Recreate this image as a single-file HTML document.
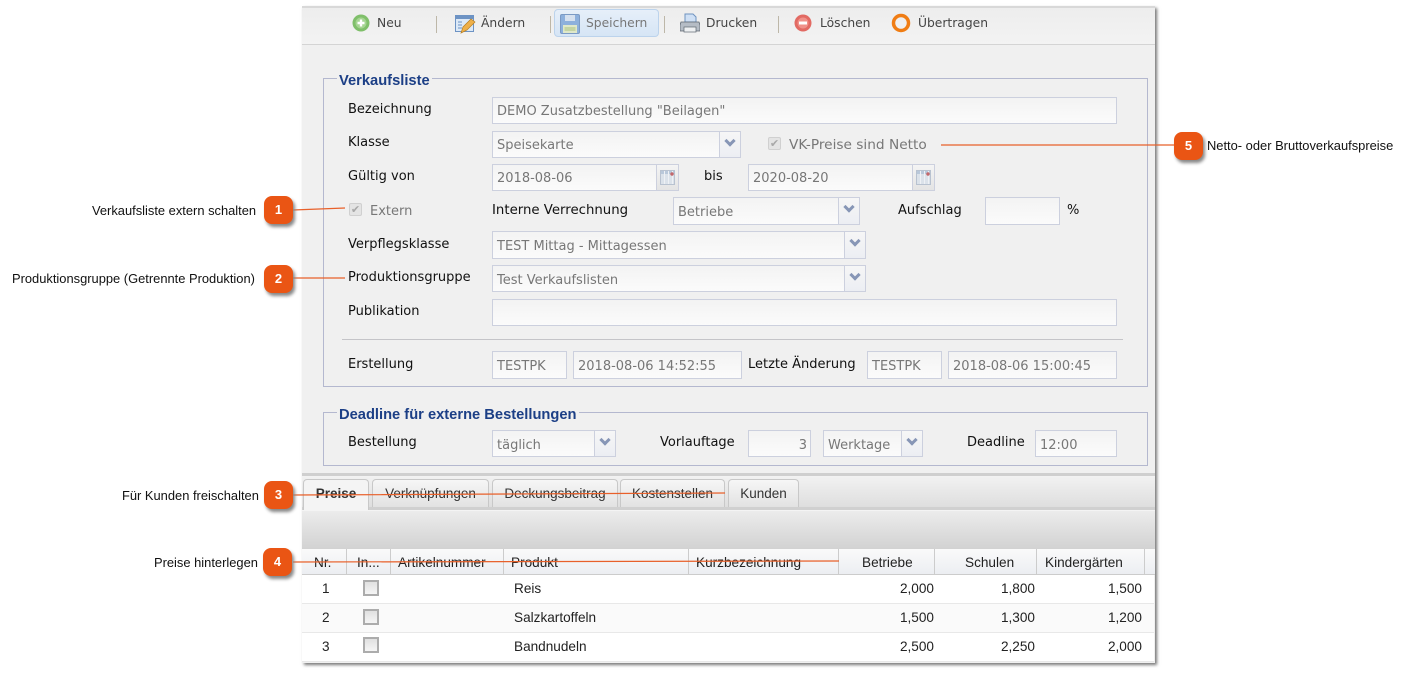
<!DOCTYPE html>
<html><head><meta charset="utf-8"><style>
html,body{margin:0;padding:0;background:#fff;width:1408px;height:675px;overflow:hidden}
body{position:relative;font-family:"DejaVu Sans","Liberation Sans",sans-serif}
div,span{position:absolute;box-sizing:border-box;white-space:nowrap}
#panel{left:302px;top:6px;width:853px;height:657px;background:#f0f0f0;border-top:2px solid #d8d8d8;box-shadow:2px 2px 3px #777}
.l{font-size:13px;line-height:16px;color:#111;height:16px}
.i{background:linear-gradient(#f3f3f3,#fbfbfb);border:1px solid #ccd0de;color:#777;font-size:13px;line-height:27px;padding-left:4px;height:27px}
.d{line-height:29px}
.tr{position:absolute;right:0;top:0;bottom:0;width:21px;border-left:1px solid #ccd0de;background:linear-gradient(#f6f6f6,#eceef3)}
.tr:after{content:"";position:absolute;left:6px;top:5px;width:8px;height:8px;box-sizing:border-box;border-right:3px solid #8796b6;border-bottom:3px solid #8796b6;transform:rotate(45deg)}
.cal{position:absolute;right:0;top:0;bottom:0;width:22px;border-left:1px solid #ccd0de;background:linear-gradient(#f4f4f4,#e4e4e4)}
.cal:after{content:"";position:absolute;left:3px;top:5px;width:15px;height:15px;background:radial-gradient(circle at 11px 3px,#c2686c 0,#c2686c 1.500px,transparent 2px),repeating-linear-gradient(90deg,transparent 0 3px,#eef1f5 3px 4px),linear-gradient(#b9c8da 0 3px,#dbe2ea 3px);border:1px solid #b8c2d0;box-sizing:border-box}
.fs{border:1px solid #b4b8cf}
.lg{font-weight:bold;font-size:14.700px;color:#1c3f86;background:#f0f0f0;padding:0 2px;line-height:16px;font-family:"Liberation Sans",sans-serif}
.tb{font-size:12.300px;line-height:16px;color:#444}
.sep{width:1px;height:17px;top:16px;background:#bdb7a8}
.tab{top:479px;height:28px;border:1px solid #c8c8c8;border-bottom:0;border-radius:4px 4px 0 0;background:linear-gradient(#f6f6f6,#e2e2e2);font:13.500px/28px "Liberation Sans",sans-serif;color:#333;text-align:center}
.h{top:549px;height:26px;border-right:1px solid #ccc;font:13.600px/27px "Liberation Sans",sans-serif;color:#222}
.c{font:13.600px/16px "Liberation Sans",sans-serif;color:#222}
.r{text-align:right}
.row{left:302px;width:852px;height:29px;border-bottom:1px solid #e8e8e8}
.cb{left:363px;width:16px;height:16px;border:2px solid #acacac;background:linear-gradient(#e0e0e0,#f5f5f5)}
.ck{width:13px;height:13px;border:1px solid #d0d0d0;border-radius:2px;background:#e4e4e4;color:#a8a8a8;font-size:11px;line-height:11px;text-align:center}
.n{font:bold 13px/28px "Liberation Sans",sans-serif;color:#fff;text-align:center;background:#ea5514;border-radius:8px;width:29px;height:28px;box-shadow:2px 3px 3px #888}
.t{font:12.900px/16px "Liberation Sans",sans-serif;color:#111}
</style></head><body>
<div id="panel"></div>
<div style="left:302px;top:8px;width:853px;height:37px;background:linear-gradient(#ededed,#f3f3f3);border-bottom:1px solid #d4d4d4"></div>

<svg style="position:absolute;left:352px;top:14px" width="18" height="18" viewBox="0 0 18 18"><circle cx="9" cy="9" r="8.500" fill="#7fbf6a"/><circle cx="9" cy="9" r="5.500" fill="#a5d592"/><path d="M9 5.500v7M5.500 9h7" stroke="#fff" stroke-width="2.400"/></svg>
<div class="tb" style="left:377px;top:15px">Neu</div>
<div class="sep" style="left:436px"></div>
<svg style="position:absolute;left:455px;top:14px" width="21" height="20" viewBox="0 0 21 20"><rect x="0.500" y="1.500" width="18" height="16" fill="#dce9f7" stroke="#6d93c4"/><rect x="1" y="2" width="17" height="3" fill="#6d93c4"/><path d="M3 8h4M3 11h4M3 14h4" stroke="#6d93c4"/><path d="M6 19l2-6 8-8 4 3-8 8z" fill="#eeb04a" stroke="#b87f22" stroke-width=".7"/></svg>
<div class="tb" style="left:481px;top:15px">Ändern</div>
<div class="sep" style="left:550px"></div>
<div style="left:554px;top:9px;width:105px;height:28px;border:1px solid #bcd3ec;border-radius:4px;background:linear-gradient(#e6eff9,#d6e5f5)"></div>
<svg style="position:absolute;left:560px;top:14px" width="20" height="20" viewBox="0 0 20 20"><rect x="0.500" y="0.500" width="19" height="19" rx="1.500" fill="#8db0dc" stroke="#7b9ac4"/><rect x="5" y="1" width="10" height="6" fill="#d6e1ef"/><rect x="3" y="11" width="14" height="8" fill="#dfe8c9"/><path d="M4.500 14h11M4.500 16h11" stroke="#a9c07b"/></svg>
<div class="tb" style="left:586px;top:15px;color:#777">Speichern</div>
<div class="sep" style="left:664px"></div>
<svg style="position:absolute;left:680px;top:13px" width="20" height="20" viewBox="0 0 20 20"><path d="M5 9V1h8l3 3v5z" fill="#cfe0f5" stroke="#6f93c0"/><path d="M1 9h18l1 3v6H0v-6z" fill="#b5bcc5" stroke="#5d6670" stroke-width=".8"/><rect x="4" y="14" width="12" height="5" fill="#eef0f2" stroke="#5d6670" stroke-width=".7"/></svg>
<div class="tb" style="left:706px;top:15px">Drucken</div>
<div class="sep" style="left:778px"></div>
<svg style="position:absolute;left:794px;top:14px" width="18" height="18" viewBox="0 0 18 18"><circle cx="9" cy="9" r="8.500" fill="#e26a63"/><circle cx="9" cy="9" r="5.500" fill="#f0918a"/><path d="M5 9h8" stroke="#fff" stroke-width="3"/></svg>
<div class="tb" style="left:820px;top:15px">Löschen</div>
<svg style="position:absolute;left:891px;top:13px" width="20" height="20" viewBox="0 0 20 20"><circle cx="10" cy="10" r="7.500" fill="none" stroke="#f07d14" stroke-width="3.500"/></svg>
<div class="tb" style="left:918px;top:15px">Übertragen</div>

<div class="fs" style="left:323px;top:78px;width:825px;height:309px"></div>
<div class="lg" style="left:337px;top:73px">Verkaufsliste</div>
<div class="l" style="left:348px;top:102px">Bezeichnung</div>
<div class="i" style="left:492px;top:97px;width:625px">DEMO Zusatzbestellung "Beilagen"</div>
<div class="l" style="left:348px;top:135px">Klasse</div>
<div class="i" style="left:492px;top:131px;width:249px">Speisekarte<span class="tr"></span></div>
<div class="ck" style="left:768px;top:137px">✔</div>
<div class="l" style="left:789px;top:137px;color:#777;font-size:13.700px">VK-Preise sind Netto</div>
<div class="l" style="left:348px;top:169px">Gültig von</div>
<div class="i" style="left:492px;top:164px;width:187px">2018-08-06<span class="cal"></span></div>
<div class="l" style="left:704px;top:169px">bis</div>
<div class="i" style="left:748px;top:164px;width:187px">2020-08-20<span class="cal"></span></div>
<div class="ck" style="left:349px;top:203px">✔</div>
<div class="l" style="left:370px;top:204px;color:#777">Extern</div>
<div class="l" style="left:492px;top:203px;font-size:13.300px">Interne Verrechnung</div>
<div class="i d" style="left:673px;top:197px;width:187px;height:28px">Betriebe<span class="tr"></span></div>
<div class="l" style="left:898px;top:203px">Aufschlag</div>
<div class="i" style="left:985px;top:197px;width:75px;height:28px"></div>
<div class="l" style="left:1067px;top:203px">%</div>
<div class="l" style="left:348px;top:237px">Verpflegsklasse</div>
<div class="i d" style="left:492px;top:231px;width:374px;height:28px">TEST Mittag - Mittagessen<span class="tr"></span></div>
<div class="l" style="left:348px;top:270px">Produktionsgruppe</div>
<div class="i d" style="left:492px;top:265px;width:374px">Test Verkaufslisten<span class="tr"></span></div>
<div class="l" style="left:348px;top:304px">Publikation</div>
<div class="i" style="left:492px;top:299px;width:625px"></div>
<div style="left:342px;top:339px;width:781px;height:1px;background:#c4c4c8"></div>
<div class="l" style="left:348px;top:357px">Erstellung</div>
<div class="i d" style="left:492px;top:351px;width:75px;height:28px">TESTPK</div>
<div class="i d" style="left:573px;top:351px;width:169px;height:28px">2018-08-06 14:52:55</div>
<div class="l" style="left:748px;top:357px">Letzte Änderung</div>
<div class="i d" style="left:867px;top:351px;width:75px;height:28px">TESTPK</div>
<div class="i d" style="left:948px;top:351px;width:169px;height:28px">2018-08-06 15:00:45</div>

<div class="fs" style="left:323px;top:412px;width:825px;height:54px"></div>
<div class="lg" style="left:337px;top:407px">Deadline für externe Bestellungen</div>
<div class="l" style="left:348px;top:435px">Bestellung</div>
<div class="i d" style="left:492px;top:430px;width:124px">täglich<span class="tr"></span></div>
<div class="l" style="left:660px;top:435px">Vorlauftage</div>
<div class="i d" style="left:748px;top:430px;width:63px;text-align:right;padding-right:3px">3</div>
<div class="i d" style="left:823px;top:430px;width:100px">Werktage<span class="tr"></span></div>
<div class="l" style="left:967px;top:435px">Deadline</div>
<div class="i d" style="left:1035px;top:430px;width:82px">12:00</div>

<div style="left:302px;top:473px;width:853px;height:3px;background:#cfcfcf"></div>
<div style="left:302px;top:476px;width:853px;height:31px;background:linear-gradient(#f2f2f2,#dedede)"></div>
<div style="left:302px;top:507px;width:853px;height:4px;background:#d0d0d0;border-bottom:1px solid #f4f4f4"></div>
<div style="left:302px;top:511px;width:853px;height:38px;background:linear-gradient(#ececec,#d2d2d2)"></div>
<div class="tab" style="left:303px;width:66px;height:31px;background:#f4f4f4;font-weight:bold">Preise</div>
<div class="tab" style="left:372px;width:117px">Verknüpfungen</div>
<div class="tab" style="left:492px;width:126px">Deckungsbeitrag</div>
<div class="tab" style="left:620px;width:105px">Kostenstellen</div>
<div class="tab" style="left:728px;width:71px">Kunden</div>

<div style="left:302px;top:549px;width:853px;height:26px;background:linear-gradient(#fafafa,#eceef2);border-bottom:1px solid #ccc"></div>
<div class="h" style="left:302px;width:45px;padding-left:12px">Nr.</div>
<div class="h" style="left:347px;width:44px;padding-left:10px">In...</div>
<div class="h" style="left:391px;width:113px;padding-left:7px">Artikelnummer</div>
<div class="h" style="left:504px;width:185px;padding-left:7px">Produkt</div>
<div class="h" style="left:689px;width:150px;padding-left:7px">Kurzbezeichnung</div>
<div class="h" style="left:839px;width:96px;padding-left:23px">Betriebe</div>
<div class="h" style="left:935px;width:102px;padding-left:30px">Schulen</div>
<div class="h" style="left:1037px;width:108px;padding-left:8px">Kindergärten</div>

<div class="row" style="top:575px;background:#fff"></div>
<div class="row" style="top:604px;background:#fafafa"></div>
<div class="row" style="top:633px;background:#fff"></div>
<div class="c" style="left:322px;top:581px">1</div><div class="cb" style="top:580px"></div><div class="c" style="left:514px;top:581px">Reis</div>
<div class="c r" style="left:860px;width:74px;top:581px">2,000</div><div class="c r" style="left:960px;width:75px;top:581px">1,800</div><div class="c r" style="left:1067px;width:75px;top:581px">1,500</div>
<div class="c" style="left:322px;top:610px">2</div><div class="cb" style="top:609px"></div><div class="c" style="left:514px;top:610px">Salzkartoffeln</div>
<div class="c r" style="left:860px;width:74px;top:610px">1,500</div><div class="c r" style="left:960px;width:75px;top:610px">1,300</div><div class="c r" style="left:1067px;width:75px;top:610px">1,200</div>
<div class="c" style="left:322px;top:639px">3</div><div class="cb" style="top:637px"></div><div class="c" style="left:514px;top:639px">Bandnudeln</div>
<div class="c r" style="left:860px;width:74px;top:639px">2,500</div><div class="c r" style="left:960px;width:75px;top:639px">2,250</div><div class="c r" style="left:1067px;width:75px;top:639px">2,000</div>

<svg style="position:absolute;left:0;top:0" width="1408" height="675"><g stroke="#e8602a" stroke-width="1.200" fill="none"><path d="M293 210L345 208M293 278H345M293 495L725 493M293 562L839 561M941 145H1174"/></g></svg>

<div class="n" style="left:264px;top:196px">1</div>
<div class="n" style="left:264px;top:265px">2</div>
<div class="n" style="left:264px;top:481px">3</div>
<div class="n" style="left:263px;top:548px">4</div>
<div class="n" style="left:1174px;top:132px">5</div>
<div class="t" style="left:92px;top:203px">Verkaufsliste extern schalten</div>
<div class="t" style="left:12px;top:271px">Produktionsgruppe (Getrennte Produktion)</div>
<div class="t" style="left:122px;top:488px">Für Kunden freischalten</div>
<div class="t" style="left:154px;top:555px">Preise hinterlegen</div>
<div class="t" style="left:1207px;top:138px">Netto- oder Bruttoverkaufspreise</div>
</body></html>
